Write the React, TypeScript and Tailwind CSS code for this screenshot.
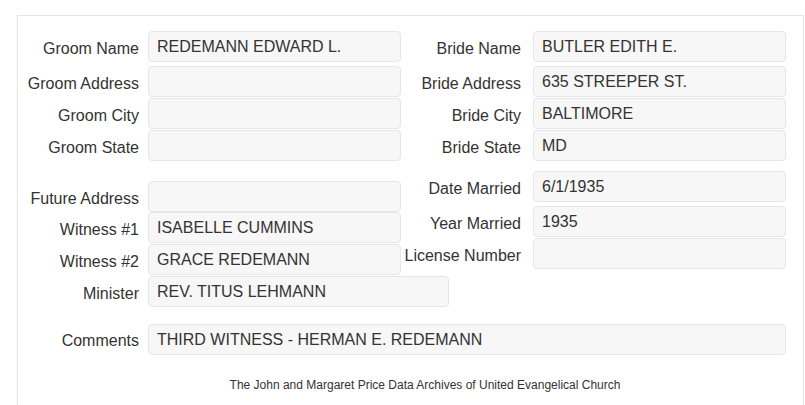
import React from "react";

type Row = { label: string; value?: string; mt: string; wide?: boolean };

const groom: Row[] = [
  { label: "Groom Name", value: "REDEMANN EDWARD L.", mt: "mt-[15px]" },
  { label: "Groom Address", mt: "mt-[4px]" },
  { label: "Groom City", mt: "mt-[1px]" },
  { label: "Groom State", mt: "mt-[1px]" },
  { label: "Future Address", mt: "mt-[20px]" },
  { label: "Witness #1", value: "ISABELLE CUMMINS", mt: "mt-0" },
  { label: "Witness #2", value: "GRACE REDEMANN", mt: "mt-[1px]" },
  { label: "Minister", value: "REV. TITUS LEHMANN", mt: "mt-[1px]", wide: true },
];

const bride: Row[] = [
  { label: "Bride Name", value: "BUTLER EDITH E.", mt: "mt-[15px]" },
  { label: "Bride Address", value: "635 STREEPER ST.", mt: "mt-[4px]" },
  { label: "Bride City", value: "BALTIMORE", mt: "mt-[1px]" },
  { label: "Bride State", value: "MD", mt: "mt-[1px]" },
  { label: "Date Married", value: "6/1/1935", mt: "mt-[10px]" },
  { label: "Year Married", value: "1935", mt: "mt-[4px]" },
  { label: "License Number", value: "", mt: "mt-[1px]" },
];

function Field({ row, labelW, gap }: { row: Row; labelW: string; gap: string }) {
  return (
    <div className={`flex items-center ${row.mt}`}>
      <div className={`${labelW} shrink-0 text-right whitespace-nowrap pt-[4px] ${gap}`}>{row.label}</div>
      <div
        className={`${row.wide ? "w-[301px]" : "w-[253px]"} h-[31px] shrink-0 flex items-center pl-[8px] bg-[#f7f7f7] border border-[#e6e6e6] rounded-[4px] text-[#333]`}
      >
        {row.value}
      </div>
    </div>
  );
}

export default function App() {
  return (
    <div
      className="w-[805px] h-[405px] overflow-hidden bg-white text-[#333] text-[16px]"
      style={{ fontFamily: '"Liberation Sans", Arial, sans-serif' }}
    >
      <div className="ml-[17px] mt-[15px] w-[787px] h-[420px] border border-[#e5e5e5]">
        <div className="flex">
          <div className="flex flex-col w-[383px]">
            {groom.map((r) => (
              <Field key={r.label} row={r} labelW="w-[121px]" gap="mr-[9px]" />
            ))}
          </div>
          <div className="flex flex-col">
            {bride.map((r) => (
              <Field key={r.label} row={r} labelW="w-[120px]" gap="mr-[12px]" />
            ))}
          </div>
        </div>
        <div className="flex items-center mt-[17px]">
          <div className="w-[121px] mr-[9px] shrink-0 text-right pt-[2px]">Comments</div>
          <div className="w-[638px] h-[31px] flex items-center pl-[8px] bg-[#f7f7f7] border border-[#e6e6e6] rounded-[4px]">
            THIRD WITNESS - HERMAN E. REDEMANN
          </div>
        </div>
        <div className="mt-[21px] pl-[29px] text-center text-[12px] leading-[18px]">
          The John and Margaret Price Data Archives of United Evangelical Church
        </div>
      </div>
    </div>
  );
}
